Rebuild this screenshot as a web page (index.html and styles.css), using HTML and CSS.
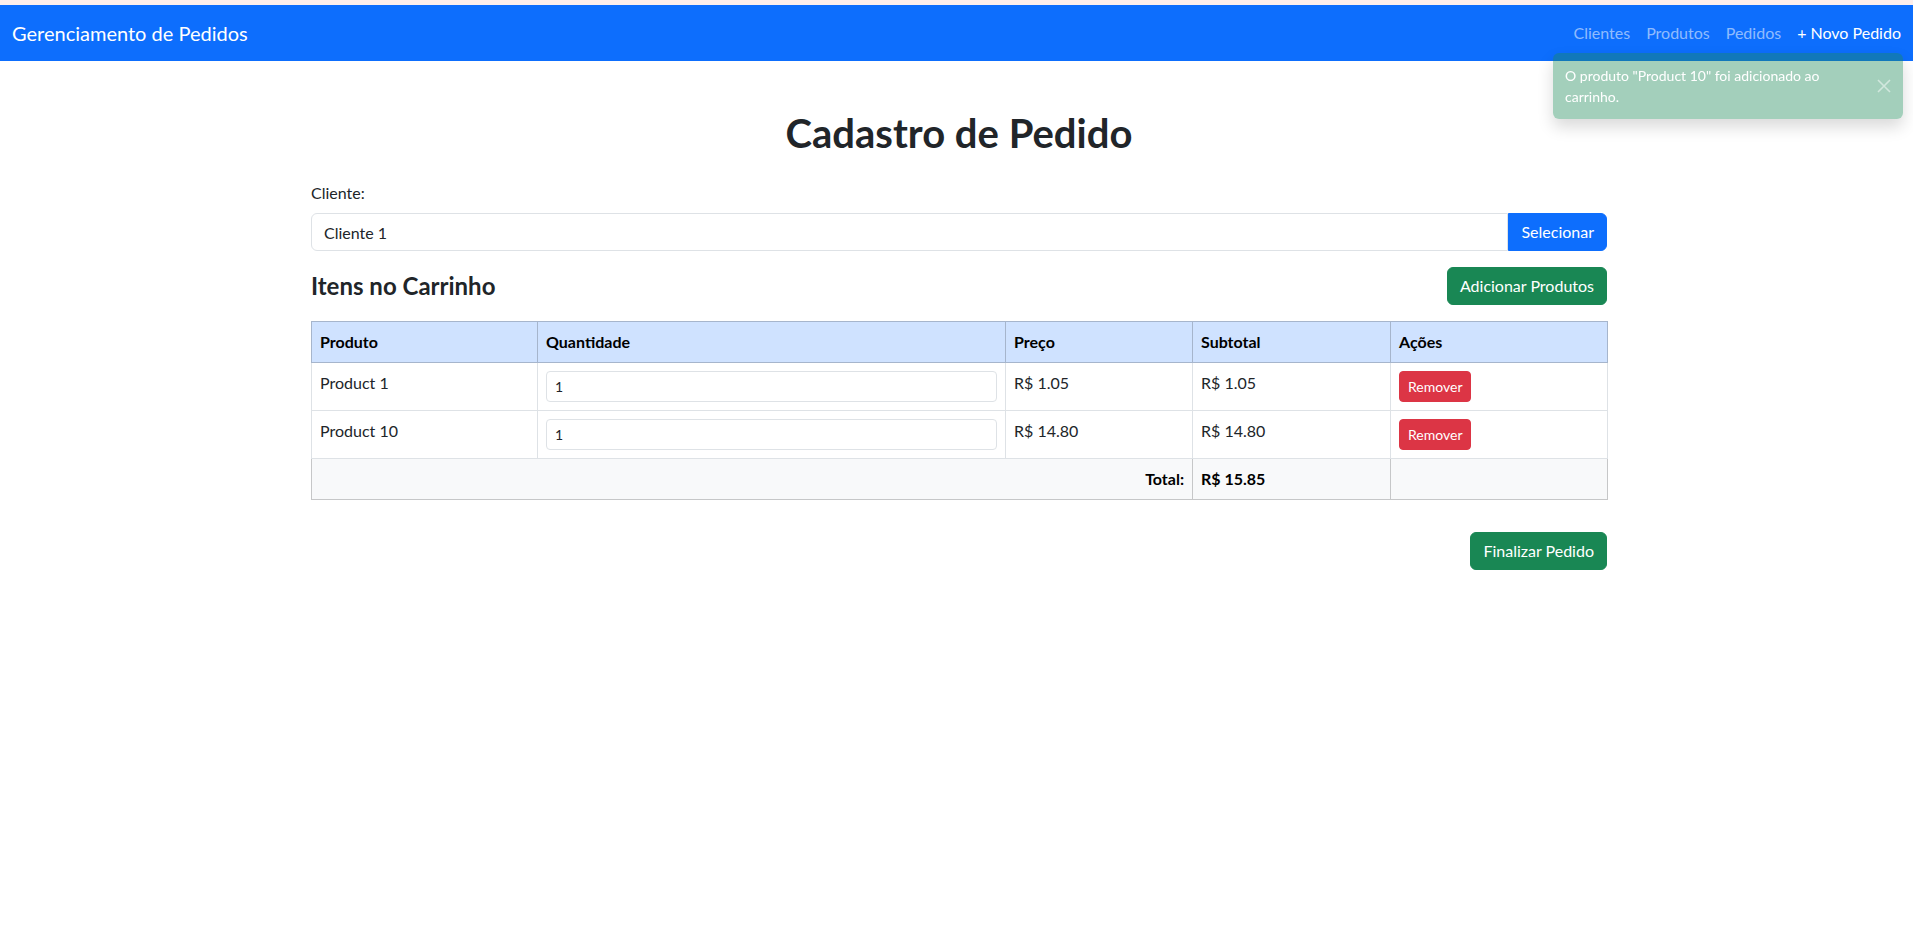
FILE: index.html
```html
<!DOCTYPE html>
<html lang="pt-BR">
<head>
<meta charset="utf-8">
<title>Cadastro de Pedido</title>
<link rel="stylesheet" href="styles.css">
</head>
<body>
<div class="topstrip"></div>
<nav class="navbar">
  <a class="brand" href="#">Gerenciamento de Pedidos</a>
  <ul class="nav">
    <li><a class="nav-link" href="#">Clientes</a></li>
    <li><a class="nav-link" href="#">Produtos</a></li>
    <li><a class="nav-link" href="#">Pedidos</a></li>
    <li><a class="nav-link active" href="#">+ Novo Pedido</a></li>
  </ul>
</nav>
<main class="main">
  <div class="container">
    <h1 class="title">Cadastro de Pedido</h1>
    <label class="form-label" for="cliente">Cliente:</label>
    <div class="input-group">
      <input id="cliente" class="form-control" type="text" value="Cliente 1" readonly>
      <button class="btn btn-primary btn-group-end">Selecionar</button>
    </div>
    <div class="cart-head">
      <h4 class="cart-title">Itens no Carrinho</h4>
      <button class="btn btn-success">Adicionar Produtos</button>
    </div>
    <table class="table">
      <colgroup>
        <col class="c1"><col class="c2"><col class="c3"><col class="c4"><col class="c5">
      </colgroup>
      <thead>
        <tr><th>Produto</th><th>Quantidade</th><th>Preço</th><th>Subtotal</th><th>Ações</th></tr>
      </thead>
      <tbody>
        <tr>
          <td>Product 1</td>
          <td><input class="form-control-sm" type="number" value="1"></td>
          <td>R$ 1.05</td>
          <td>R$ 1.05</td>
          <td><button class="btn-sm btn-danger">Remover</button></td>
        </tr>
        <tr>
          <td>Product 10</td>
          <td><input class="form-control-sm" type="number" value="1"></td>
          <td>R$ 14.80</td>
          <td>R$ 14.80</td>
          <td><button class="btn-sm btn-danger">Remover</button></td>
        </tr>
      </tbody>
      <tfoot>
        <tr><td colspan="3" class="total-label">Total:</td><td class="total-value">R$ 15.85</td><td></td></tr>
      </tfoot>
    </table>
    <div class="actions">
      <button class="btn btn-success">Finalizar Pedido</button>
    </div>
  </div>
</main>
<div class="toast">
  <div class="toast-body">O produto "Product 10" foi adicionado ao carrinho.</div>
  <button class="btn-close" aria-label="Close">
    <svg width="14" height="14" viewBox="0 0 14 14"><path d="M1 1L13 13M13 1L1 13" stroke="#fff" stroke-width="1.6" fill="none"/></svg>
  </button>
</div>
</body>
</html>
```

FILE: styles.css
```css
* { box-sizing: border-box; }
body {
  margin: 0;
  font-family: Lato, "Liberation Sans", sans-serif;
  font-size: 16px;
  line-height: 1.5;
  color: #212529;
  background: #fff;
}
.topstrip { height: 5px; background: #fdefec; }
.navbar {
  height: 56px;
  background: #0d6efd;
  display: flex;
  align-items: center;
  justify-content: space-between;
  padding: 0 12px;
}
.brand { color: #fff; font-size: 20px; text-decoration: none; line-height: 30px; }
.nav { list-style: none; margin: 0; padding: 0; display: flex; }
.nav-link { display: block; padding: 8px; color: rgba(255,255,255,.55); text-decoration: none; }
.nav-link.active { color: #fff; padding-right: 0; }
.main { padding-left: 5px; }
.container { max-width: 1296px; margin: 0 auto; padding-top: 48px; }
.title { margin: 0 0 24px; font-size: 40px; font-weight: 700; line-height: 1.2; text-align: center; }
.form-label { display: block; margin-bottom: 8px; }
.input-group { display: flex; }
.form-control {
  flex: 1;
  height: 38px;
  padding: 6px 12px;
  font: inherit;
  color: #212529;
  border: 1px solid #dee2e6;
  border-radius: 6px 0 0 6px;
  outline: none;
}
.btn {
  font: inherit;
  line-height: 24px;
  padding: 6px 12px;
  border: 1px solid transparent;
  border-radius: 6px;
  color: #fff;
  cursor: pointer;
}
.btn-primary { background: #0d6efd; border-color: #0d6efd; }
.btn-group-end { border-radius: 0 6px 6px 0; }
.btn-success { background: #198754; border-color: #198754; }
.cart-head { display: flex; justify-content: space-between; align-items: center; margin-top: 16px; }
.cart-title { margin: 0; font-size: 24px; font-weight: 700; line-height: 1.2; }
.table {
  width: 100%;
  margin-top: 16px;
  border-collapse: collapse;
  table-layout: fixed;
}
.c1 { width: 226px; } .c2 { width: 468px; } .c3 { width: 187px; } .c4 { width: 198px; } .c5 { width: 217px; }
.table th, .table td {
  padding: 8px;
  border: 1px solid #dee2e6;
  vertical-align: top;
  text-align: left;
  line-height: 24px;
}
.table thead th { background: #cfe2ff; color: #000; font-weight: 700; border-color: #a6b5cc; }
.table tfoot td { background: #f8f9fa; color: #000; border-color: #c6c7c8; font-weight: 400; }
.table tfoot .total-label { text-align: right; font-weight: 700; }
.table tfoot .total-value { font-weight: 700; }
.form-control-sm {
  display: block;
  width: 100%;
  height: 31px;
  padding: 4px 8px;
  font-family: inherit;
  font-size: 14px;
  color: #212529;
  border: 1px solid #dee2e6;
  border-radius: 4px;
  -moz-appearance: textfield;
}
.form-control-sm::-webkit-inner-spin-button, .form-control-sm::-webkit-outer-spin-button { -webkit-appearance: none; margin: 0; }
.btn-sm {
  font-family: inherit;
  font-size: 14px;
  line-height: 21px;
  padding: 4px 8px;
  border: 1px solid transparent;
  border-radius: 4px;
  color: #fff;
}
.btn-danger { background: #dc3545; border-color: #dc3545; }
.actions { display: flex; justify-content: flex-end; margin-top: 32px; }
.toast {
  position: fixed;
  top: 53px;
  right: 10px;
  width: 350px;
  display: flex;
  align-items: center;
  background: rgba(25,135,84,.4);
  border-radius: 6px;
  box-shadow: 0 8px 16px rgba(0,0,0,.15);
  color: #fff;
  font-size: 14px;
  line-height: 21px;
}
.toast-body { flex: 1; padding: 12px; }
.btn-close { background: none; border: 0; padding: 4px; margin-right: 8px; opacity: .5; display: flex; }
```
